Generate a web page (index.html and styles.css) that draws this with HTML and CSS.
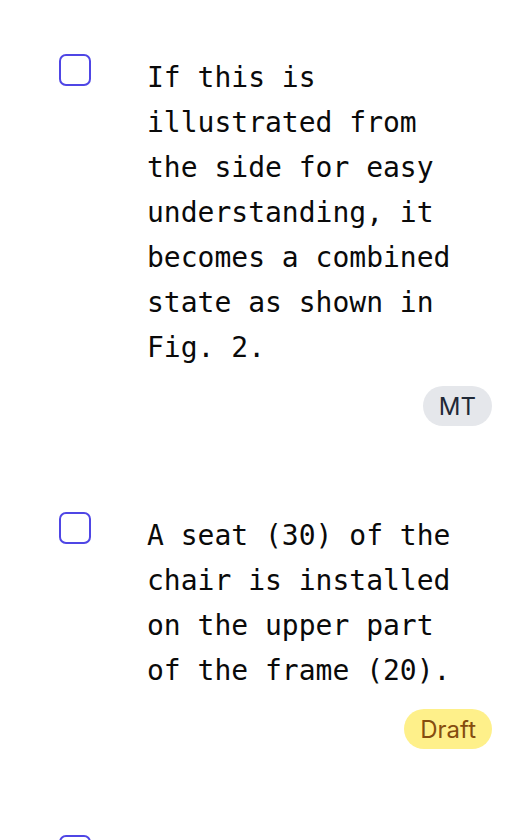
FILE: index.html
```html
<!DOCTYPE html>
<html lang="en">
<head>
<meta charset="utf-8">
<title>Segments</title>
<link rel="stylesheet" href="styles.css">
</head>
<body>
<ul class="list">
  <li class="item">
    <div class="row">
      <span class="check"></span>
      <p class="text">If this is illustrated from the side for easy understanding, it becomes a combined state as shown in Fig. 2.</p>
    </div>
    <div class="meta"><span class="badge badge-gray">MT</span></div>
  </li>
  <li class="item">
    <div class="row">
      <span class="check"></span>
      <p class="text">A seat (30) of the chair is installed on the upper part of the frame (20).</p>
    </div>
    <div class="meta"><span class="badge badge-yellow">Draft</span></div>
  </li>
  <li class="item">
    <div class="row">
      <span class="check"></span>
      <p class="text">The backrest (40) is attached to the rear of the seat.</p>
    </div>
    <div class="meta"><span class="badge badge-gray">MT</span></div>
  </li>
</ul>
</body>
</html>
```
FILE: styles.css
```css
html, body {
  margin: 0;
  padding: 0;
  background: #ffffff;
}
.list {
  list-style: none;
  margin: 0;
  padding: 54px 30px 0 59px;
  display: flex;
  flex-direction: column;
  gap: 86px;
}
.item {
  display: flex;
  flex-direction: column;
  gap: 16px;
}
.row {
  display: flex;
  align-items: flex-start;
  gap: 56px;
}
.check {
  flex: none;
  width: 28px;
  height: 28px;
  border: 2px solid #4f46e5;
  border-radius: 7px;
}
.text {
  margin: 1px 0 0;
  width: 320px;
  font-family: "DejaVu Sans Mono", monospace;
  font-size: 28px;
  line-height: 45px;
  color: #0a0a0a;
}
.meta {
  display: flex;
  justify-content: flex-end;
}
.badge {
  display: inline-flex;
  align-items: center;
  height: 40px;
  padding: 0 16px;
  border-radius: 20px;
  font-family: Inter, "Liberation Sans", sans-serif;
  font-size: 24px;
}
.badge-gray {
  background: #e5e7eb;
  color: #1f2937;
}
.badge-yellow {
  background: #fef08a;
  color: #854d0e;
}
```
